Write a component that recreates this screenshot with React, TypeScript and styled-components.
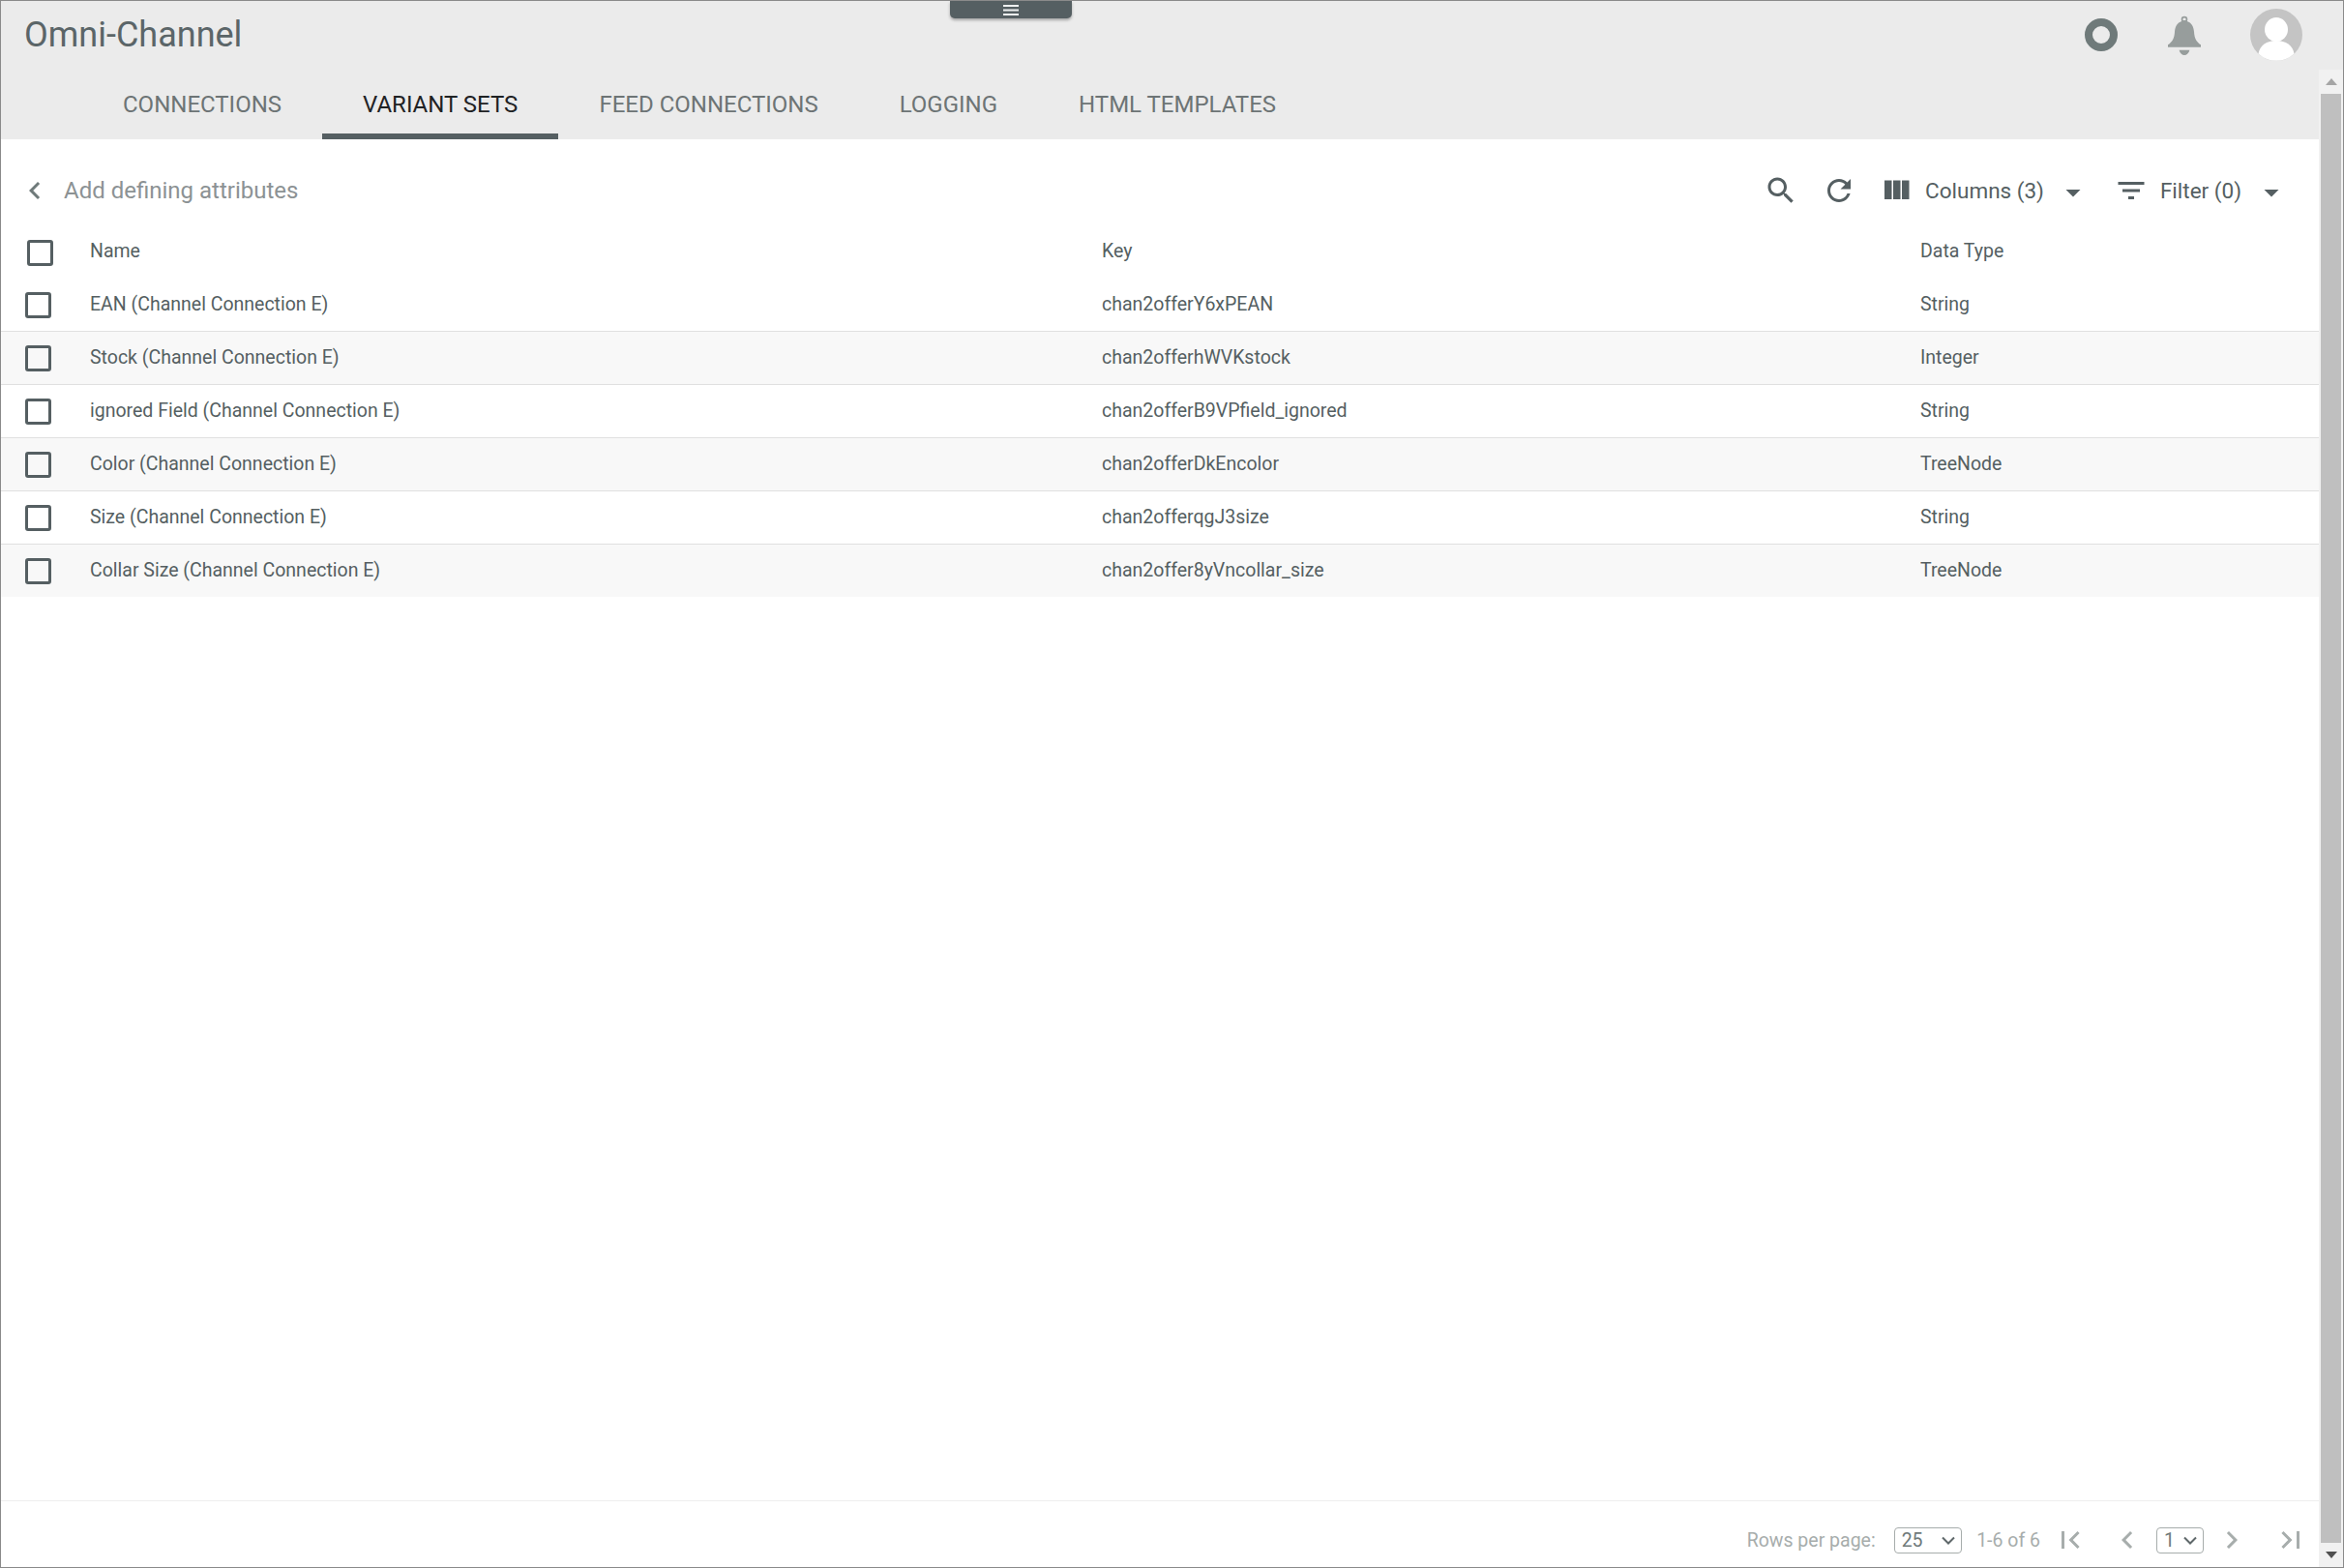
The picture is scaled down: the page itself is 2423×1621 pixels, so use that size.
import styled, { createGlobalStyle } from 'styled-components'

const GlobalStyle = createGlobalStyle`
  html, body {
    margin: 0;
    padding: 0;
    background: #fff;
    font-family: Roboto, "Liberation Sans", sans-serif;
    -webkit-font-smoothing: antialiased;
  }
  * { box-sizing: border-box; }
`

const tabs = ['CONNECTIONS', 'VARIANT SETS', 'FEED CONNECTIONS', 'LOGGING', 'HTML TEMPLATES']

const rows = [
  { name: 'EAN (Channel Connection E)', key: 'chan2offerY6xPEAN', type: 'String' },
  { name: 'Stock (Channel Connection E)', key: 'chan2offerhWVKstock', type: 'Integer' },
  { name: 'ignored Field (Channel Connection E)', key: 'chan2offerB9VPfield_ignored', type: 'String' },
  { name: 'Color (Channel Connection E)', key: 'chan2offerDkEncolor', type: 'TreeNode' },
  { name: 'Size (Channel Connection E)', key: 'chan2offerqgJ3size', type: 'String' },
  { name: 'Collar Size (Channel Connection E)', key: 'chan2offer8yVncollar_size', type: 'TreeNode' },
]

const paths = {
  search: 'M15.5 14h-.79l-.28-.27C15.41 12.59 16 11.11 16 9.5 16 5.91 13.09 3 9.5 3S3 5.91 3 9.5 5.91 16 9.5 16c1.61 0 3.09-.59 4.23-1.57l.27.28v.79l5 4.99L20.49 19l-4.99-5zm-6 0C7.01 14 5 11.99 5 9.5S7.01 5 9.5 5 14 7.01 14 9.5 11.99 14 9.5 14z',
  refresh: 'M17.65 6.35C16.2 4.9 14.21 4 12 4c-4.42 0-7.99 3.58-7.99 8s3.57 8 7.99 8c3.73 0 6.84-2.55 7.73-6h-2.08c-.82 2.33-3.04 4-5.65 4-3.31 0-6-2.69-6-6s2.69-6 6-6c1.66 0 3.14.69 4.22 1.78L13 11h7V4l-2.35 2.35z',
  columns: 'M10 18h5V5h-5v13zm-6 0h5V5H4v13zM16 5v13h5V5h-5z',
  filter: 'M10 18h4v-2h-4v2zM3 6v2h18V6H3zm3 7h12v-2H6v2z',
  caret: 'M7 10l5 5 5-5z',
  left: 'M15.41 7.41L14 6l-6 6 6 6 1.41-1.41L10.83 12z',
  right: 'M8.59 16.59L10 18l6-6-6-6-1.41 1.41L13.17 12z',
  first: 'M18.41 16.59L13.82 12l4.59-4.59L17 6l-6 6 6 6zM6 6h2v12H6z',
  last: 'M5.59 7.41L10.18 12l-4.59 4.59L7 18l6-6-6-6zM16 6h2v12h-2z',
}

function Icon({ name, $color = '#555f62', $ml = 0, $mt = 0 }: { name: keyof typeof paths; $color?: string; $ml?: number; $mt?: number }) {
  return (
    <IconSvg viewBox="0 0 24 24" $color={$color} $ml={$ml} $mt={$mt}>
      <path d={paths[name]} />
    </IconSvg>
  )
}

function Chevron() {
  return (
    <SelectChevron width="14" height="9" viewBox="0 0 14 9">
      <path d="M1 1.500l6 6 6-6" fill="none" stroke="#5f686a" strokeWidth="2" />
    </SelectChevron>
  )
}

export default function App() {
  return (
    <>
      <GlobalStyle />
      <Page>
        <Header>
          <TopBar>
            <Title>Omni-Channel</Title>
            <TopIcons>
              <Ring />
              <svg width="36" height="42" viewBox="0 0 36 42">
                <path
                  fill="#979d9c"
                  fillRule="evenodd"
                  d="M18 1.800a3.300 3.300 0 0 0-3.300 3.300c0 .7.2 1.300.5 1.800C10.600 8.400 8.300 12.500 8 18c-.4 6.500-2.400 10.300-7 13.300v2.400h34v-2.400c-4.600-3-6.600-6.800-7-13.300-.3-5.500-2.600-9.600-7.200-11.100.3-.5.500-1.100.5-1.800A3.300 3.300 0 0 0 18 1.800zm0 1.700a1.600 1.600 0 0 1 1.300 2.500 9 9 0 0 0-2.600 0A1.600 1.600 0 0 1 18 3.500zM12.600 36.700h10.800c-.8 3.200-2.900 5.300-5.400 5.300s-4.600-2.100-5.400-5.300z"
                />
              </svg>
              <Avatar viewBox="0 0 54 54">
                <circle cx="27" cy="27" r="27" fill="#c4c4c4" />
                <ellipse cx="27" cy="21.500" rx="12" ry="12.500" fill="#fff" />
                <path fill="#fff" d="M8.500 46.500C10 38 17 33 27 33s17 5 18.500 13.500a27 27 0 0 1-37 0z" />
              </Avatar>
            </TopIcons>
          </TopBar>
          <Tabs>
            {tabs.map((t) => (
              <Tab key={t} $active={t === 'VARIANT SETS'}>{t}</Tab>
            ))}
          </Tabs>
        </Header>
        <MenuHandle>
          <svg width="16" height="11" viewBox="0 0 16 11">
            <path fill="#eef0f0" d="M0 0h16v2H0zM0 4.500h16v2H0zM0 9h16v2H0z" />
          </svg>
        </MenuHandle>
        <Main>
          <Toolbar>
            <Icon name="left" $color="#6f7a7a" />
            <Heading>Add defining attributes</Heading>
            <Actions>
              <Icon name="search" />
              <Icon name="refresh" $ml={24} />
              <Icon name="columns" $ml={23} />
              <ActionLabel>Columns (3)</ActionLabel>
              <Icon name="caret" $ml={12} $mt={3} />
              <Icon name="filter" $ml={24} />
              <ActionLabel>Filter (0)</ActionLabel>
              <Icon name="caret" $ml={13} $mt={3} />
            </Actions>
          </Toolbar>
          <HeadRow>
            <CheckCell $head><Check type="checkbox" /></CheckCell>
            <div>Name</div>
            <div>Key</div>
            <div>Data Type</div>
          </HeadRow>
          {rows.map((r, i) => (
            <Row key={r.key} $odd={i % 2 === 1} $last={i === rows.length - 1}>
              <CheckCell><Check type="checkbox" /></CheckCell>
              <div>{r.name}</div>
              <div>{r.key}</div>
              <div>{r.type}</div>
            </Row>
          ))}
        </Main>
        <Footer>
          <FooterText>Rows per page:</FooterText>
          <SelectBox $width={70} $ml={19}>
            <NativeSelect defaultValue="25">
              <option>10</option>
              <option>25</option>
              <option>50</option>
            </NativeSelect>
            <Chevron />
          </SelectBox>
          <RangeText>1-6 of 6</RangeText>
          <Icon name="first" $color="#a7adac" $ml={13} />
          <Icon name="left" $color="#a7adac" $ml={23} />
          <SelectBox $width={49} $ml={12}>
            <NativeSelect defaultValue="1">
              <option>1</option>
            </NativeSelect>
            <Chevron />
          </SelectBox>
          <Icon name="right" $color="#a7adac" $ml={11} />
          <Icon name="last" $color="#a7adac" $ml={25} />
        </Footer>
        <Scrollbar>
          <ScrollArrow viewBox="0 0 12 7" width="12" height="7">
            <path fill="#a5a5a5" d="M6 0l6 7H0z" />
          </ScrollArrow>
          <Thumb />
          <ScrollArrow viewBox="0 0 12 7" width="12" height="7">
            <path fill="#505050" d="M6 7L0 0h12z" />
          </ScrollArrow>
        </Scrollbar>
      </Page>
    </>
  )
}

const Page = styled.div`
  position: relative;
  display: flex;
  flex-direction: column;
  height: 1621px;
  border: 1px solid #8a8a8a;
  color: #555f62;
  overflow: hidden;
`

const Header = styled.header`
  background: #ebebeb;
  height: 143px;
`

const TopBar = styled.div`
  display: flex;
  align-items: center;
  height: 71px;
  padding: 0 42px 2px 24px;
`

const Title = styled.h1`
  margin: 0;
  font-size: 36px;
  font-weight: 400;
  color: #5b6568;
`

const TopIcons = styled.div`
  margin-left: auto;
  display: flex;
  align-items: center;
  gap: 50px;
`

const Ring = styled.span`
  width: 34px;
  height: 34px;
  margin-right: 1px;
  border: 8px solid #6f7a7a;
  border-radius: 50%;
`

const Avatar = styled.svg`
  width: 54px;
  height: 54px;
`

const Tabs = styled.nav`
  display: flex;
  height: 72px;
  padding-left: 84px;
`

const Tab = styled.div<{ $active?: boolean }>`
  display: flex;
  align-items: center;
  padding: 6px 42px 0;
  font-size: 24px;
  color: ${(p) => (p.$active ? '#1f2224' : '#6d7475')};
  border-bottom: 6px solid ${(p) => (p.$active ? '#555f62' : 'transparent')};
`

const MenuHandle = styled.div`
  position: absolute;
  top: 0;
  left: 981px;
  width: 126px;
  height: 18px;
  display: flex;
  align-items: center;
  justify-content: center;
  background: #555f62;
  border-radius: 0 0 5px 5px;
  box-shadow: 0 2px 3px rgba(0, 0, 0, 0.3);
`

const Main = styled.main`
  flex: 1;
  width: 2396px;
`

const Toolbar = styled.div`
  display: flex;
  align-items: center;
  height: 88px;
  padding: 18px 31px 0 17px;
`

const Heading = styled.div`
  margin-left: 12px;
  font-size: 24px;
  color: #8c9294;
`

const Actions = styled.div`
  margin-left: auto;
  display: flex;
  align-items: center;
  font-size: 22.5px;
`

const ActionLabel = styled.span`
  margin-left: 12px;
`

const IconSvg = styled.svg<{ $color: string; $ml: number; $mt: number }>`
  flex: none;
  width: 36px;
  height: 36px;
  margin-left: ${(p) => p.$ml}px;
  margin-top: ${(p) => p.$mt}px;
  fill: ${(p) => p.$color};
`

const TableGrid = styled.div`
  display: grid;
  grid-template-columns: 92px 1046px 846px 1fr;
  align-items: center;
  font-size: 19.5px;
`

const HeadRow = styled(TableGrid)`
  height: 56px;
  padding-bottom: 1px;
`

const Row = styled(TableGrid)<{ $odd: boolean; $last: boolean }>`
  height: ${(p) => (p.$last ? 54 : 55)}px;
  padding-bottom: 2px;
  background: ${(p) => (p.$odd ? '#f8f8f8' : '#fff')};
  border-bottom: ${(p) => (p.$last ? 'none' : '1px solid #e0e0e0')};
`

const CheckCell = styled.div<{ $head?: boolean }>`
  display: flex;
  padding-left: ${(p) => (p.$head ? 27 : 25)}px;
  padding-top: ${(p) => (p.$head ? 4 : 2)}px;
`

const Check = styled.input`
  appearance: none;
  margin: 0;
  width: 27px;
  height: 27px;
  border: 3px solid #555f62;
  border-radius: 3px;
  background: transparent;
`

const Footer = styled.footer`
  display: flex;
  align-items: center;
  justify-content: flex-end;
  width: 2396px;
  height: 69px;
  padding: 12px 11px 0 0;
  border-top: 1px solid #eeeeee;
  font-size: 19.5px;
`

const FooterText = styled.span`
  color: #a7adac;
`

const RangeText = styled(FooterText)`
  margin-left: 15.5px;
`

const SelectBox = styled.div<{ $width: number; $ml: number }>`
  position: relative;
  flex: none;
  width: ${(p) => p.$width}px;
  height: 27px;
  margin-left: ${(p) => p.$ml}px;
`

const NativeSelect = styled.select`
  appearance: none;
  display: block;
  width: 100%;
  height: 100%;
  padding: 0 0 0 7px;
  font-family: inherit;
  font-size: 19.5px;
  color: #6f7a7a;
  background: #fff;
  border: 1px solid #a7adac;
  border-radius: 4px;
  outline: none;
`

const SelectChevron = styled.svg`
  position: absolute;
  top: 9px;
  right: 7px;
  pointer-events: none;
`

const Scrollbar = styled.div`
  position: absolute;
  top: 71px;
  right: 0;
  bottom: 0;
  width: 25px;
  display: flex;
  flex-direction: column;
  align-items: center;
  background: #f1f1f1;
`

const ScrollArrow = styled.svg`
  flex: none;
  margin: 9px 0;
`

const Thumb = styled.div`
  flex: 1;
  align-self: stretch;
  margin: 0 2px;
  background: #bfbfbf;
`
